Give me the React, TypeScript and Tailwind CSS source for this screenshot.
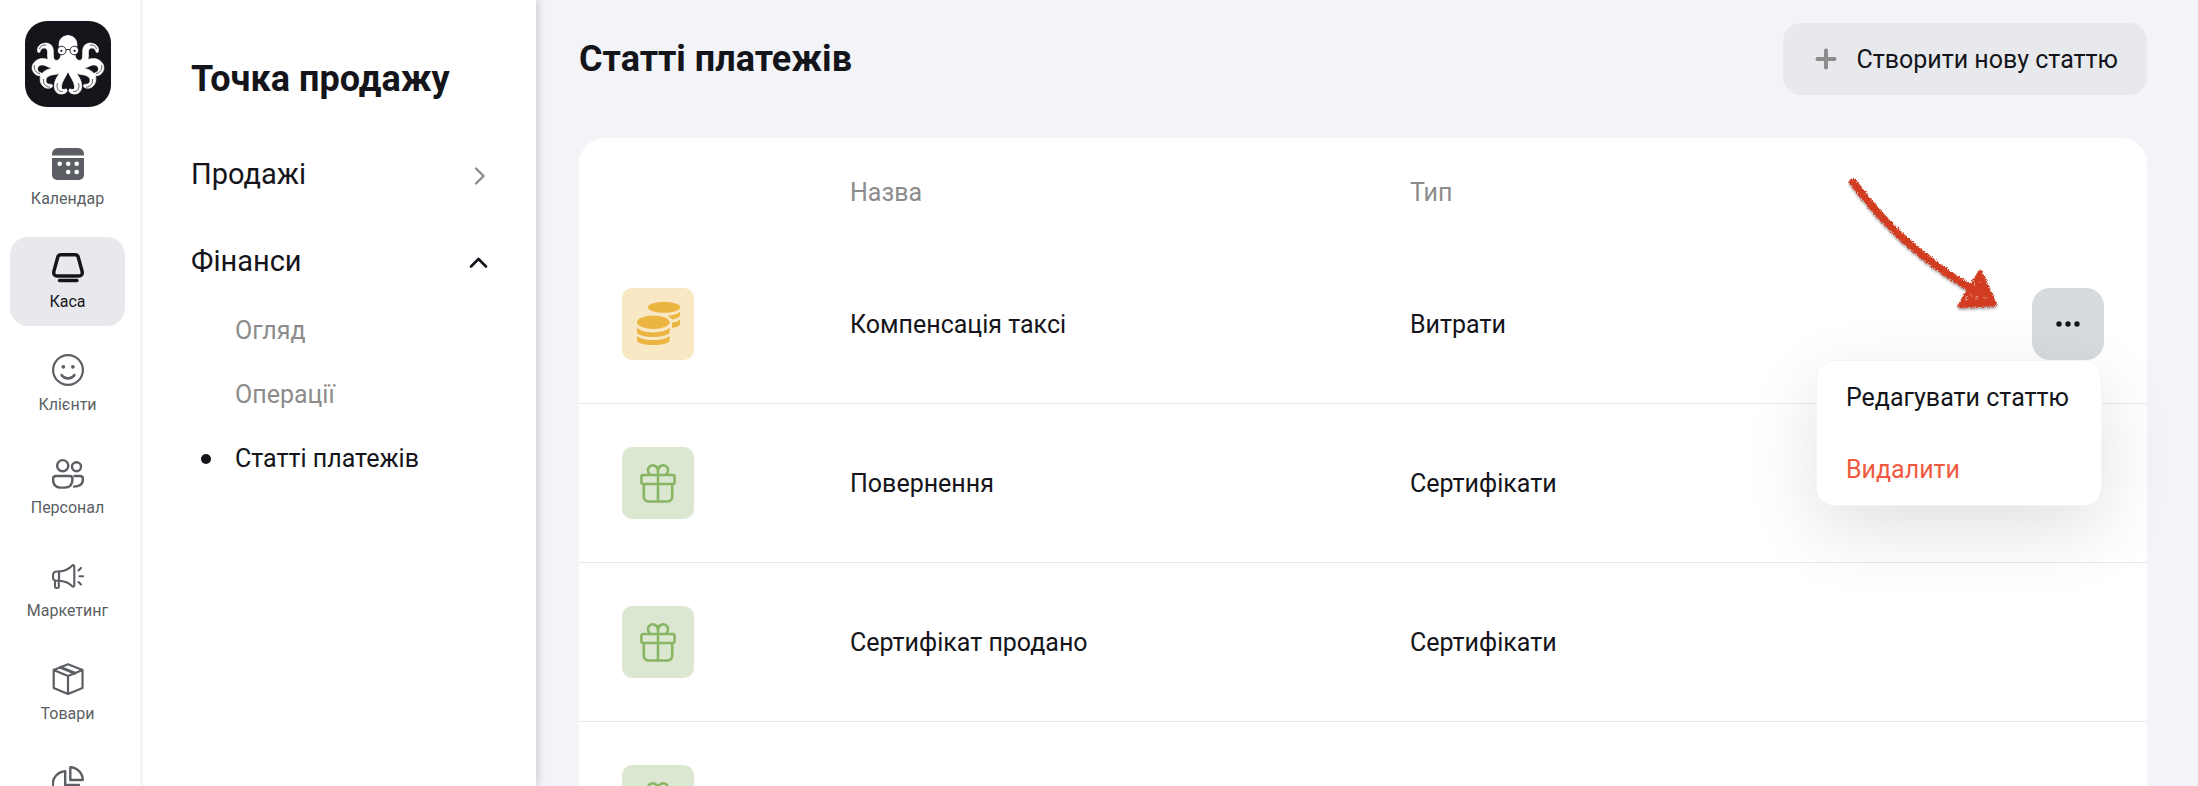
import type { ReactNode } from 'react';

function OctopusHalf() {
  return (
    <g>
      <path
        fill="#fff"
        stroke="#fff"
        strokeWidth=".7"
        strokeLinejoin="round"
        d="M43.500 14.500c-6 0-9.500 3.900-9.500 9 0 4 1.500 6 1.800 9 .2 3-.7 6-3.300 6.800-2.500.6-3.600-.8-4-3.300-.5-3.600.6-7-1.200-10.300-1.800-3.200-6-4.400-10-3-3.400 1.200-5.200 4-4.800 7.300.2 1.400 1.500 2 2.400 1 .6-2.600 2-4 4.200-4 2.600 0 3.600 1.900 3.500 4.800-.1 2.500-.3 4.500.6 6.700-3.500-1.200-8-1.400-11.400.7-4.200 2.500-5.800 7-3.900 10.900 1.600 3.200 4.900 5.400 8 4.600 1.800-.6 1.600-2.600-.1-3-2.700-.7-3.800-2.400-3.200-4.700.8-2.700 4-3.700 7.300-2.500 2.400.9 4.600 2.500 7.200 2.700-4.400 1-9.600 2.900-11.400 7.700-1.600 4.500.3 9.800 4.700 11.800 2.400 1 6 .6 7.100-1.300.7-1.400-.6-2.400-2.200-2.200-2.900.3-4.700-1.300-4.300-4.400.5-3.600 4.600-4.700 8.500-5.200 2-.3 3.800-.8 5.300-1.800-2.800 4-5.400 8-5.500 12.700-.1 5 2.400 8.300 6.400 8.500 3.400.1 6.300-1.300 6.400-3.600 0-1.600-1.500-1.900-2.800-1-2.100.7-3-.6-2.800-3.300.4-4.600 4-8.600 6.500-14.600z"
      />
      <path
        fill="none"
        stroke="#14151a"
        strokeWidth=".7"
        d="M14.500 28c.8-3 3.500-4.600 6.500-3.800M9.500 44c-1 4.500 1.500 8 5.500 8.600M18.700 58c-1 4.500 1.800 8 6.300 8.200M32.500 62c-1.500 5 .8 9 5.300 8.600"
      />
      <circle cx="36.700" cy="29.500" r="4.300" fill="#fff" stroke="#14151a" strokeWidth=".9" />
      <circle cx="36.300" cy="29.800" r="1.100" fill="#14151a" />
    </g>
  );
}

function Logo() {
  return (
    <svg viewBox="0 0 86 86" className="size-[86px] rounded-[22px] bg-[#14151a]" role="img" aria-label="Логотип">
      <OctopusHalf />
      <g transform="translate(86 0) scale(-1 1)">
        <OctopusHalf />
      </g>
      <path d="M41 28.800q2-.8 4 0" fill="none" stroke="#14151a" strokeWidth=".9" />
    </svg>
  );
}

function RailIcon({ children, width = 2.2 }: { children: ReactNode; width?: number }) {
  return (
    <svg
      viewBox="0 0 32 32"
      className="size-8 shrink-0"
      fill="none"
      stroke="currentColor"
      strokeWidth={width}
      strokeLinecap="round"
      strokeLinejoin="round"
      aria-hidden="true"
    >
      {children}
    </svg>
  );
}

const calendarIcon = (
  <RailIcon>
    <g stroke="none" fill="currentColor">
      <path d="M0 7.500V6a6 6 0 0 1 6-6h20a6 6 0 0 1 6 6v1.500z" />
      <path d="M0 10h32v17a5 5 0 0 1-5 5H5a5 5 0 0 1-5-5z" />
    </g>
    <g stroke="none" fill="#fff">
      <circle cx="7.700" cy="15.800" r="2.300" />
      <circle cx="16.200" cy="15.800" r="2.300" />
      <circle cx="24.700" cy="15.800" r="2.300" />
      <circle cx="16.200" cy="24" r="2.300" />
      <circle cx="24.700" cy="24" r="2.300" />
    </g>
  </RailIcon>
);

const registerIcon = (
  <RailIcon width={3.4}>
    <path d="M8.800 3.700h14.400c1.500 0 2.600.9 3 2.300l3.900 14.300c.7 2.700-.7 4.700-3.400 4.700H5.300c-2.700 0-4.100-2-3.400-4.700L5.800 6c.4-1.400 1.500-2.300 3-2.300z" />
    <path d="M7.500 29.500h17.500" />
  </RailIcon>
);

const smileIcon = (
  <RailIcon>
    <circle cx="16" cy="16" r="14.900" />
    <circle cx="11.300" cy="12.800" r="1.900" fill="currentColor" stroke="none" />
    <circle cx="20.900" cy="12.800" r="1.900" fill="currentColor" stroke="none" />
    <path d="M9.500 21c3.300 4.600 9.700 4.600 13 0" strokeWidth="2.400" />
  </RailIcon>
);

const staffIcon = (
  <RailIcon width={2.4}>
    <circle cx="10.700" cy="8.700" r="5.600" />
    <circle cx="24.500" cy="9.800" r="4.500" />
    <path d="M4 19h13.500c2 0 3 1 3 3 0 5.500-2.500 8.600-8 8.600H9c-5.500 0-8-3.100-8-8.600 0-2 1-3 3-3z" />
    <path d="M22.500 19h5.500c2 0 3 1 3 3 0 5-2.500 7.600-9 7.600" />
  </RailIcon>
);

const megaphoneIcon = (
  <RailIcon width={2.1}>
    <path d="M7 11.500c6-.4 9.500-2 13-5.800 1-1 2.300-.6 2.300.8v18.800c0 1.400-1.300 1.800-2.300.8-3.500-3.600-7-5-13-5.300z" />
    <path d="M7 11.500H4.500c-2 0-3.500 1.500-3.500 3.500v2.500c0 2 1.500 3.300 3.500 3.300H7zM3 21v6c0 1.200 3.800 1.200 3.800 0v-6" />
    <path d="M26.500 10.500 29 8M27.500 16.300H31M26.500 22l2.500 2.500" />
  </RailIcon>
);

const boxIcon = (
  <RailIcon>
    <path d="M16 1.300 30.500 7v18L16 31 1.700 25V7zM1.700 7 16 13 30.500 7M16 13v18" />
    <path d="M8.500 4.300 22.800 10.200" strokeWidth="3" />
  </RailIcon>
);

const pieIcon = (
  <RailIcon width={2.4}>
    <path d="M13.200 5.200A13 13 0 1 0 26.800 19H13.200z" />
    <path d="M18.300 1.200A13 13 0 0 1 30.800 14H18.300z" />
  </RailIcon>
);

const railItems = [
  { id: 'calendar', label: 'Календар', icon: calendarIcon },
  { id: 'register', label: 'Каса', icon: registerIcon, active: true },
  { id: 'clients', label: 'Клієнти', icon: smileIcon },
  { id: 'staff', label: 'Персонал', icon: staffIcon },
  { id: 'marketing', label: 'Маркетинг', icon: megaphoneIcon },
  { id: 'goods', label: 'Товари', icon: boxIcon },
  { id: 'reports', icon: pieIcon },
];

function Rail() {
  return (
    <nav aria-label="Розділи" className="relative z-20 w-[143px] shrink-0 border-r-[3px] border-[#f3f4f7] bg-white pt-[21px] pr-[15px] pl-2.5">
      <a href="#home" className="mb-[27px] flex justify-center">
        <Logo />
      </a>
      <ul className="flex flex-col gap-3.5">
        {railItems.map((item) => (
          <li key={item.id}>
            <a
              href={`#${item.id}`}
              aria-label={item.label ?? item.id}
              aria-current={item.active ? 'page' : undefined}
              className={
                item.active
                  ? 'flex h-[89px] flex-col items-center gap-2 rounded-[18px] bg-[#e8e9ed] pt-3.5 text-[#14151a]'
                  : 'flex h-[89px] flex-col items-center gap-2 rounded-[18px] pt-3.5 text-[#5b5f64]'
              }
            >
              {item.icon}
              {item.label && <span className="text-base leading-[22px]">{item.label}</span>}
            </a>
          </li>
        ))}
      </ul>
    </nav>
  );
}

const financeLinks = [
  { label: 'Огляд' },
  { label: 'Операції' },
  { label: 'Статті платежів', active: true },
];

function SidePanel() {
  return (
    <aside className="relative z-10 w-[393px] shrink-0 bg-white px-12 pt-[55px] shadow-[2px_0_8px_rgba(20,21,26,0.18)]">
      <h2 className="mb-[34px] text-4xl leading-[48px] font-bold">Точка продажу</h2>
      <div className="flex flex-col gap-3">
        <button type="button" className="flex h-[75px] items-center justify-between text-left text-[29px]" aria-expanded="false">
          Продажі
          <svg viewBox="0 0 20 20" className="size-5" fill="none" stroke="#8c8c8c" strokeWidth="2.400" strokeLinecap="round" strokeLinejoin="round" aria-hidden="true">
            <path d="m8 3.500 7.500 7.500L8 18.500" />
          </svg>
        </button>
        <button type="button" className="flex h-[75px] items-center justify-between text-left text-[29px]" aria-expanded="true">
          Фінанси
          <svg viewBox="0 0 20 20" className="size-5" fill="none" stroke="currentColor" strokeWidth="2.600" strokeLinecap="round" strokeLinejoin="round" aria-hidden="true">
            <path d="m3 14.500 7.500-7.500 7.500 7.500" />
          </svg>
        </button>
      </div>
      <ul>
        {financeLinks.map((link) => (
          <li key={link.label}>
            <a
              href="#finance"
              aria-current={link.active ? 'page' : undefined}
              className={
                link.active
                  ? 'flex h-16 items-center gap-6 pl-2.5 text-[25px]'
                  : 'flex h-16 items-center gap-6 pl-2.5 text-[25px] text-[#8c8c8c]'
              }
            >
              <span className={link.active ? 'size-2.5 rounded-full bg-[#14151a]' : 'size-2.5'} />
              {link.label}
            </a>
          </li>
        ))}
      </ul>
    </aside>
  );
}

function CoinsIcon() {
  return (
    <svg viewBox="0 0 72 72" className="size-[72px] rounded-[10px] bg-[#f8e8c4]" fill="#ecb440" aria-hidden="true">
      <ellipse cx="42" cy="19.300" rx="16.200" ry="5.500" />
      <path d="M58 23.500v4c0 1.800-3.500 3.200-8 4-1.200-1.500-2.700-2.700-4.500-3.700 6-.5 11-2 12.500-4.300z" />
      <path d="M58 31.500v4.500c0 1.800-3.500 3.300-8 4v-5.200c4-.6 7-1.800 8-3.300z" />
      <ellipse cx="31.300" cy="34.300" rx="16.300" ry="6.700" />
      <path d="M15 39.500c2 3 8.500 4.900 16.300 4.900s14.300-1.900 16.300-4.900V44c0 2.800-7 5-16.300 5S15 46.800 15 44z" />
      <path d="M15 47.800c2 2.600 8.500 4.300 16.300 4.300s14.300-1.700 16.300-4.300v4.400c0 2.700-7 4.800-16.300 4.800S15 54.900 15 52.200z" />
    </svg>
  );
}

function GiftIcon() {
  return (
    <svg viewBox="0 0 72 72" className="size-[72px] rounded-[10px] bg-[#dbe7d0]" fill="none" stroke="#88b564" strokeWidth="2.600" aria-hidden="true">
      <rect x="19.400" y="28" width="33.200" height="9" rx="2" />
      <path d="M21.800 37v13a4.500 4.500 0 0 0 4.500 4.500h19.400a4.500 4.500 0 0 0 4.500-4.500V37M36 22v32.500" />
      <path d="M28 27.500c-2.600-2-2.700-6-.4-8 3-2.500 7.700-.8 8.400 3.500.7-4.300 5.400-6 8.400-3.500 2.300 2 2.200 6-.4 8" />
    </svg>
  );
}

function Arrow() {
  return (
    <svg viewBox="0 0 160 150" className="pointer-events-none absolute -top-[118px] right-[104px] h-[150px] w-40" aria-hidden="true">
      <defs>
        <filter id="chalk" x="-10%" y="-10%" width="120%" height="120%">
          <feTurbulence type="fractalNoise" baseFrequency="0.8" numOctaves="2" seed="7" result="noise" />
          <feDisplacementMap in="SourceGraphic" in2="noise" scale="5" xChannelSelector="R" yChannelSelector="G" result="rough" />
          <feDropShadow in="rough" dx="0" dy="2" stdDeviation="1" floodOpacity="0.35" />
        </filter>
      </defs>
      <g filter="url(#chalk)">
        <path d="M13 12Q60 76 127 116" fill="none" stroke="#d23c20" strokeWidth="7.500" strokeLinecap="round" />
        <path d="m140 103 14 31-34 1.500z" fill="#d23c20" stroke="#d23c20" strokeWidth="5" strokeLinejoin="round" />
        <path d="m126 131 1-4m9 3 1-4m7 0 2 3m-12-13 1-3m3-1 1 2m-8 12v-3" fill="none" stroke="#eba697" strokeWidth="1" />
      </g>
    </svg>
  );
}

function RowMenu() {
  return (
    <div className="relative ml-auto w-[72px]">
      <button type="button" aria-label="Дії" aria-expanded="true" className="flex size-[72px] items-center justify-center rounded-[18px] bg-[#d7dbde]">
        <svg viewBox="0 0 24 6" className="h-1.5 w-6" fill="#14151a" aria-hidden="true">
          <circle cx="3" cy="3" r="2.700" />
          <circle cx="12" cy="3" r="2.700" />
          <circle cx="21" cy="3" r="2.700" />
        </svg>
      </button>
      <Arrow />
      <div className="absolute top-full right-0.5 rounded-[18px] border border-[#f3f4f7] bg-white whitespace-nowrap shadow-[0_24px_72px_rgba(0,0,0,0.12)]">
        <button type="button" className="block h-[72px] w-full pt-0.5 pr-8 pl-[29px] text-left">Редагувати статтю</button>
        <button type="button" className="block h-[72px] w-full pt-0.5 pr-8 pl-[29px] text-left text-[#f05a40]">Видалити</button>
      </div>
    </div>
  );
}

const rows = [
  { id: 1, name: 'Компенсація таксі', type: 'Витрати', icon: <CoinsIcon />, menu: true },
  { id: 2, name: 'Повернення', type: 'Сертифікати', icon: <GiftIcon /> },
  { id: 3, name: 'Сертифікат продано', type: 'Сертифікати', icon: <GiftIcon /> },
  { id: 4, icon: <GiftIcon /> },
];

function PaymentTable() {
  return (
    <div className="rounded-t-[26px] bg-white">
      <table className="w-full table-fixed border-separate border-spacing-0 text-left text-[25px]">
        <colgroup>
          <col className="w-[271px]" />
          <col />
          <col />
          <col className="w-[177px]" />
        </colgroup>
        <thead>
          <tr className="h-[107px] text-[#8c8c8c]">
            <td />
            <th scope="col" className="pt-0.5 font-normal">Назва</th>
            <th scope="col" className="pt-0.5 font-normal">Тип</th>
            <td />
          </tr>
        </thead>
        <tbody>
          {rows.map((row) => (
            <tr key={row.id} className="h-[159px]">
              <td className="border-b border-[#e8e9ed] pl-[43px]">{row.icon}</td>
              <td className="border-b border-[#e8e9ed] pt-0.5">{row.name}</td>
              <td className="border-b border-[#e8e9ed] pt-0.5">{row.type}</td>
              <td className="border-b border-[#e8e9ed] pr-[43px]">{row.menu && <RowMenu />}</td>
            </tr>
          ))}
        </tbody>
      </table>
    </div>
  );
}

export default function App() {
  return (
    <div className="flex h-screen overflow-hidden bg-[#f3f4f7] font-[Roboto,sans-serif] text-[#14151a]">
      <Rail />
      <SidePanel />
      <main className="min-w-0 flex-1 pt-[23px] pr-[51px] pl-[43px]">
        <header className="mb-[43px] flex items-center justify-between">
          <h1 className="text-4xl leading-[48px] font-bold">Статті платежів</h1>
          <button type="button" className="flex h-[72px] items-center gap-4 rounded-[18px] bg-[#e8e9ed] px-[29px] pt-0.5 text-[25px]">
            <svg viewBox="0 0 28 28" className="size-7" fill="none" stroke="#8c8c8c" strokeWidth="4" strokeLinecap="round" aria-hidden="true">
              <path d="M14 4.500v17M5.500 13h17" />
            </svg>
            Створити нову статтю
          </button>
        </header>
        <PaymentTable />
      </main>
    </div>
  );
}
